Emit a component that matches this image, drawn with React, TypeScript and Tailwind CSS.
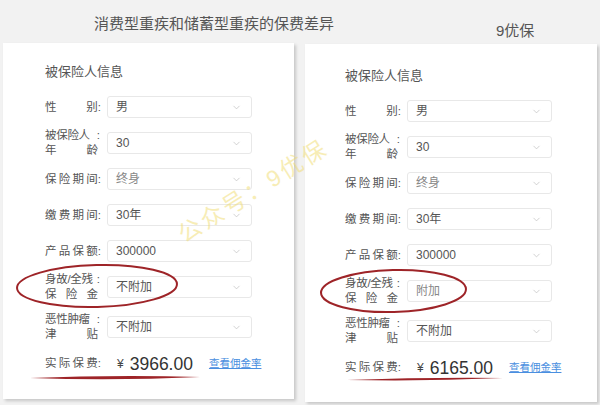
import { ChevronDown } from 'lucide-react';

// one form row: either a single justified label or a two-line label
type Field = {
  label: string[];
  second?: string[];
  value: string;
  light?: boolean;
  extra?: string;
};

const fieldsFor = (death: string): Field[] => [
  { label: ['性', '别:'], value: '男' },
  { label: ['被保险人'], second: ['年', '龄'], value: '30' },
  { label: ['保', '险', '期', '间:'], value: '终身', light: true },
  { label: ['缴', '费', '期', '间:'], value: '30年' },
  { label: ['产', '品', '保', '额:'], value: '300000' },
  { label: ['身故/全残'], second: ['保', '险', '金'], value: death, light: death === '附加' },
  { label: ['恶性肿瘤'], second: ['津', '贴'], value: '不附加', extra: 'mt-[4px]' },
];

function Label({ field }: { field: Field }) {
  if (!field.second) {
    return (
      <div className="flex w-[56px] justify-between text-[11.5px] leading-[15px] text-[#555]">
        {field.label.map((c) => (
          <span key={c}>{c}</span>
        ))}
      </div>
    );
  }
  return (
    <div className="flex w-[56px] flex-col text-[11.5px] leading-[15px] text-[#555]">
      <div className="flex justify-between whitespace-nowrap">
        <span className="tracking-[-0.3px]">{field.label[0]}</span>
        <span className="pr-[1px]">:</span>
      </div>
      <div className="flex justify-between pr-[3px]">
        {field.second.map((c) => (
          <span key={c}>{c}</span>
        ))}
      </div>
    </div>
  );
}

function FieldRow({ field }: { field: Field }) {
  return (
    <div className={`flex h-9 items-center ${field.extra ?? ''}`}>
      <Label field={field} />
      <div className="ml-[6px] flex h-[22px] w-[145px] items-center justify-between rounded-[3px] border border-[#e8e8e8] bg-white pl-[8px] pr-[9px]">
        <span className={`text-[12px] ${field.light ? 'text-[#888]' : 'text-[#555]'}`}>{field.value}</span>
        <ChevronDown size={11} strokeWidth={1.5} className="text-[#bdbdbd]" />
      </div>
    </div>
  );
}

function QuoteCard({ death, price, className }: { death: string; price: string; className: string }) {
  return (
    <div className={`flex flex-col bg-white shadow-[2px_2px_3px_rgba(0,0,0,0.18)] ${className}`}>
      <div className="text-[13px] leading-[16px] text-[#555]">被保险人信息</div>
      <div className="mt-[9px] flex flex-col">
        {fieldsFor(death).map((f) => (
          <FieldRow key={f.label[0]} field={f} />
        ))}
        <div className="mt-[1px] flex h-9 items-center">
          <div className="flex w-[56px] justify-between text-[11.5px] text-[#555]">
            <span>实</span>
            <span>际</span>
            <span>保</span>
            <span>费:</span>
          </div>
          <span className="ml-[16px] text-[12px] text-[#444]">¥</span>
          <span className="ml-[6px] text-[17.5px] leading-[20px] text-[#333]">{price}</span>
          <span className="ml-[16px] text-[10.5px] text-[#4a8fe0] underline">查看佣金率</span>
        </div>
      </div>
    </div>
  );
}

export default function App() {
  return (
    <div className="relative h-[405px] w-[600px] overflow-hidden bg-[#f2f2f2] font-['Liberation_Sans','Noto_Sans_CJK_SC',sans-serif]">
      {/* header */}
      <div className="flex h-[43px]">
        <div className="ml-[94px] mt-[15px] text-[15px] leading-[17px] text-[#555]">
          消费型重疾和储蓄型重疾的保费差异
        </div>
        <div className="ml-[162px] mt-[22px] text-[15px] leading-[17px] text-[#555]">9优保</div>
      </div>

      {/* two screenshots side by side */}
      <div className="flex items-start pl-[3px]">
        <QuoteCard death="不附加" price="3966.00" className="h-[356px] w-[291px] pl-[42px] pt-[21px]" />
        <QuoteCard
          death="附加"
          price="6165.00"
          className="ml-[11px] mt-[1px] h-[358px] w-[292px] pl-[40px] pt-[24px]"
        />
      </div>

      {/* watermark */}
      <span className="pointer-events-none absolute left-[158px] top-[178px] w-[190px] rotate-[-32deg] text-center text-[23px] leading-[26px] tracking-[3px] text-[#f1dc70] opacity-50">
        公众号：9优保
      </span>

      {/* red hand-drawn marks */}
      <svg className="pointer-events-none absolute left-0 top-0" width="600" height="405" viewBox="0 0 600 405">
        <ellipse cx="97" cy="286" rx="80" ry="21" fill="none" stroke="#9e2428" strokeWidth="2" transform="rotate(-1.5 97 286)" />
        <ellipse cx="393.5" cy="291" rx="72.5" ry="21" fill="none" stroke="#9e2428" strokeWidth="2" transform="rotate(-1.5 393 291)" />
        <path d="M30 378 Q115 374.8 200 377 Q115 380.8 30 378 Z" fill="#9e2428" />
        <path d="M347 380 Q425 377.2 503 378 Q425 381.6 347 380 Z" fill="#9e2428" />
      </svg>
    </div>
  );
}
